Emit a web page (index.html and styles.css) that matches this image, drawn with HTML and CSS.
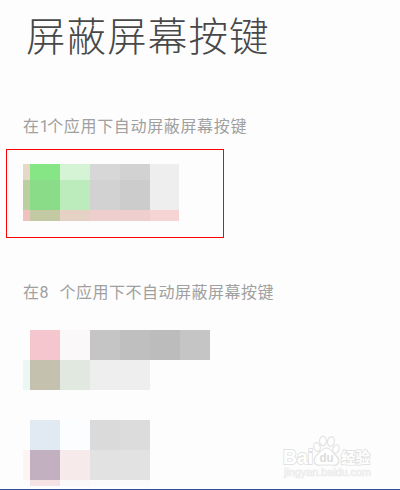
FILE: index.html
```html
<!DOCTYPE html>
<html lang="zh-CN">
<head>
    <meta charset="UTF-8">
    <meta name="viewport" content="width=device-width, initial-scale=1.0">
    <title>屏蔽屏幕按键</title>
    <link rel="stylesheet" href="styles.css">
</head>
<body>
    <div class="page">
        <h1>屏蔽屏幕按键</h1>

        <h2>在<span class="num">1</span>个应用下自动屏蔽屏幕按键</h2>
        <div class="highlight">
            <div class="mosaic mosaic-first">
                <i class="sand"></i><i class="green"></i><i class="mint"></i><i class="gray-2"></i><i class="gray-3"></i><i class="gray-0"></i>
                <i class="moss"></i><i class="green-dark"></i><i class="mint-dark"></i><i class="gray-3"></i><i class="gray-4"></i><i class="gray-0"></i>
                <i class="rose"></i><i class="olive"></i><i class="tan"></i><i class="blush"></i><i class="blush"></i><i class="blush-light"></i>
            </div>
        </div>

        <h2 class="second">在<span class="num wide">8</span>个应用下不自动屏蔽屏幕按键</h2>
        <div class="mosaic mosaic-second">
            <i></i><i class="pink"></i><i class="snow"></i><i class="gray-5"></i><i class="gray-6"></i><i class="gray-7"></i><i class="gray-5"></i>
            <i class="ice"></i><i class="khaki"></i><i class="sage"></i><i class="gray-0"></i><i class="gray-0"></i><i></i><i></i>
        </div>
        <div class="mosaic mosaic-third">
            <i></i><i class="blue"></i><i class="sky"></i><i class="gray-8"></i><i class="gray-9"></i>
            <i class="shell"></i><i class="purple"></i><i class="petal"></i><i class="gray-10"></i><i class="gray-10"></i>
            <i></i><i class="petal-dark"></i><i class="snow"></i><i class="white"></i><i class="white"></i>
        </div>

        <svg class="watermark" width="100" height="50" viewBox="0 0 100 50">
            <g class="outline">
                <text class="logo" x="2" y="30.500" textLength="30" lengthAdjust="spacingAndGlyphs">Bai</text>
                <ellipse cx="36" cy="14" rx="3.2" ry="4.500" transform="rotate(-15 36 14)"/>
                <ellipse cx="42" cy="8" rx="3.400" ry="4.700"/>
                <ellipse cx="50" cy="8.500" rx="3.400" ry="4.700" transform="rotate(8 50 8.500)"/>
                <ellipse cx="55" cy="16" rx="3" ry="4.300" transform="rotate(20 55 16)"/>
                <path d="M45.500 15c-4 0-6 3.500-8.500 6-3 2.500-4.500 5.500-3.500 8.500 1.500 3.500 5 3 7.500 2.500h9c3 .7 6.500.6 7.500-2.500 1-3.500-1-5.500-3.500-8-2.700-2.700-4.500-6.500-8.500-6.500z"/>
                <text class="du" x="38.500" y="29" textLength="14" lengthAdjust="spacingAndGlyphs">du</text>
                <text class="cn" x="60" y="29.500" textLength="29" lengthAdjust="spacingAndGlyphs">经验</text>
            </g>
            <text class="url" x="3" y="43" textLength="87" lengthAdjust="spacingAndGlyphs">jingyan.baidu.com</text>
        </svg>
    </div>
</body>
</html>
```
FILE: styles.css
```css
* {
    box-sizing: border-box;
}
body {
    margin: 0;
    background: #fdfdfd;
    font-family: "Noto Sans CJK SC", sans-serif;
}
.page {
    position: relative;
    height: 490px;
    overflow: hidden;
    border-bottom: 1px solid #2f5597;
}
h1 {
    margin: 0;
    padding: 5px 0 0 26px;
    height: 113px;
    font-size: 39.5px;
    line-height: 58px;
    font-weight: 300;
    letter-spacing: 1.1px;
    color: #484848;
    white-space: nowrap;
}
h2 {
    margin: 0;
    padding-left: 23px;
    height: 36px;
    font-size: 16px;
    line-height: 24px;
    font-weight: 400;
    letter-spacing: 0.66px;
    color: #a0a0a0;
    white-space: nowrap;
}
h2.second {
    margin-top: 41px;
    height: 51px;
    letter-spacing: 0.5px;
}
.num {
    display: inline-block;
    width: 7.5px;
    letter-spacing: 0;
    font-family: Roboto, sans-serif;
}
.num.wide {
    width: 20px;
}
.highlight {
    width: 218px;
    height: 89px;
    margin-left: 6px;
    padding: 14px 0 0 16px;
    border: 1px solid #f00;
}
.mosaic {
    display: grid;
}
.mosaic-first {
    grid-template-columns: 7px 30px 30px 30px 30px 29px;
    grid-template-rows: 16px 30px 11px;
}
.mosaic-second {
    margin-left: 23px;
    grid-template-columns: 7px repeat(6, 30px);
    grid-template-rows: 30px 30px;
}
.mosaic-third {
    margin: 30px 0 0 23px;
    grid-template-columns: 7px repeat(4, 30px);
    grid-template-rows: 30px 30px 6px;
}
.sand { background: #e5d8c7; }
.green { background: #86e686; }
.mint { background: #d4f4d5; }
.moss { background: #bbcfa1; }
.green-dark { background: #8adc89; }
.mint-dark { background: #bcebbc; }
.rose { background: #efc2bd; }
.olive { background: #c3c9a3; }
.tan { background: #e6d2c4; }
.blush { background: #efcfce; }
.blush-light { background: #f5d4d3; }
.pink { background: #f5c6ce; }
.snow { background: #fbf8f9; }
.ice { background: #ebf7f2; }
.khaki { background: #c4c2ae; }
.sage { background: #e1e8df; }
.blue { background: #e1e9f3; }
.sky { background: #fbfdff; }
.shell { background: #fcf5f4; }
.purple { background: #c2b0c1; }
.petal { background: #f6eaea; }
.petal-dark { background: #f4e2e4; }
.white { background: #fbfbfb; }
.gray-0 { background: #eee; }
.gray-2 { background: #d7d7d7; }
.gray-3 { background: #d2d2d2; }
.gray-4 { background: #ccc; }
.gray-5 { background: #c5c5c5; }
.gray-6 { background: #bfbfbf; }
.gray-7 { background: #bcbcbc; }
.gray-8 { background: #dadada; }
.gray-9 { background: #dcdcdc; }
.gray-10 { background: #e2e2e2; }
.watermark {
    position: absolute;
    left: 281px;
    top: 433px;
}
.outline {
    fill: #fff;
    stroke: #e2e2e2;
    stroke-width: 1.2;
}
.outline text {
    stroke-width: 1.8;
    paint-order: stroke;
}
.logo {
    font: bold 20px "Liberation Sans", sans-serif;
}
.outline .du {
    font: bold 13px "Liberation Sans", sans-serif;
    fill: #dcdcdc;
    stroke: none;
}
.cn {
    font: bold 15px "Noto Sans CJK SC", sans-serif;
}
.url {
    font: 11px "Liberation Sans", sans-serif;
    fill: #ebebeb;
    stroke: #f3f3f3;
    stroke-width: 1;
    paint-order: stroke;
}
```
